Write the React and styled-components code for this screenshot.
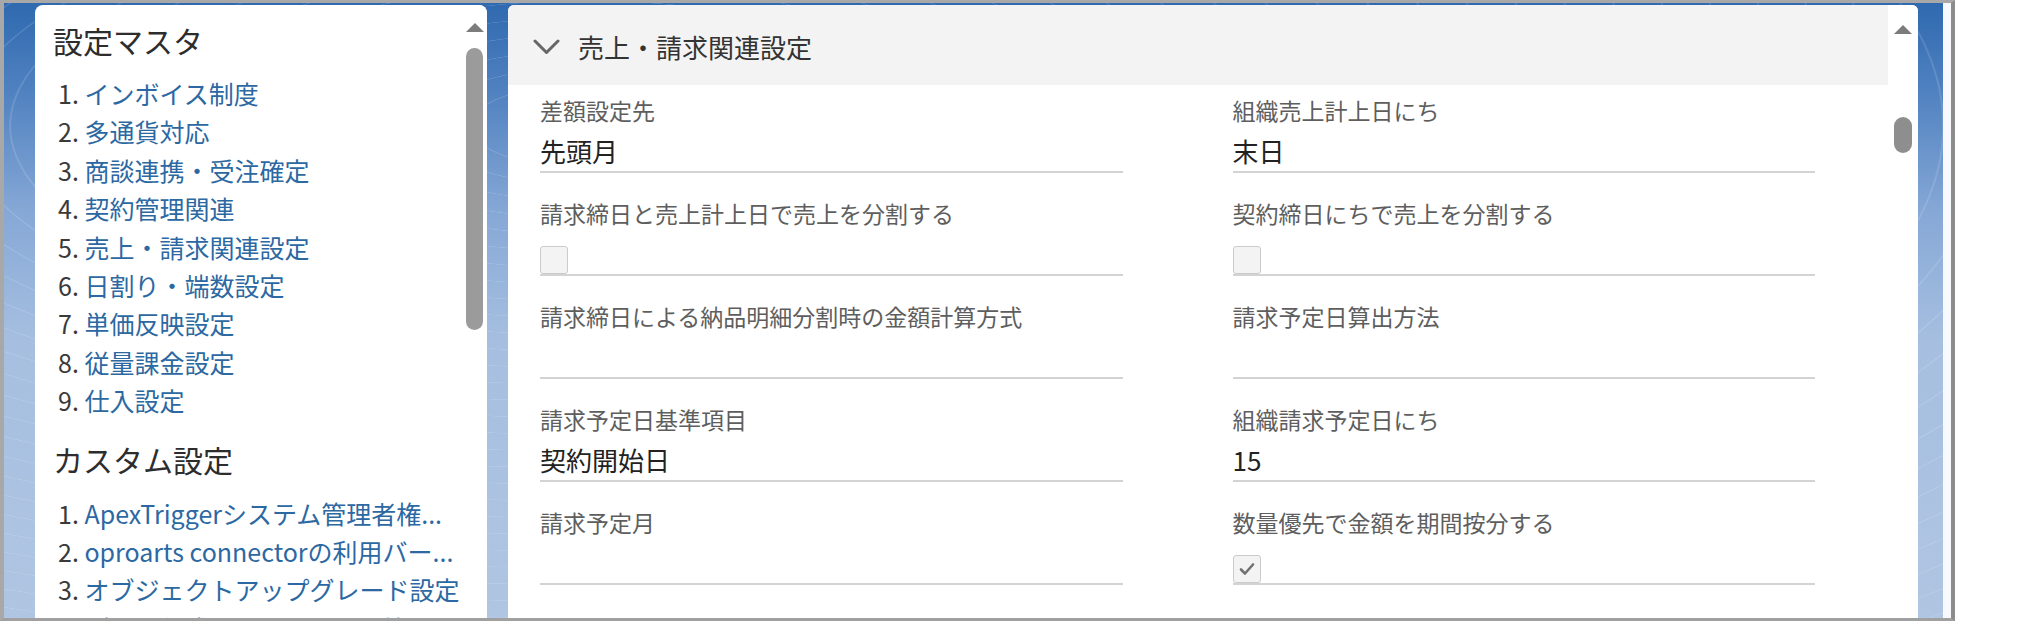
import React from "react";
import styled, { createGlobalStyle } from "styled-components";

const GlobalStyle = createGlobalStyle`
  html, body { margin: 0; padding: 0; background: #ffffff; }
  body { font-family: "Noto Sans CJK JP", "Noto Sans", sans-serif; }
  * { box-sizing: border-box; }
`;

const Frame = styled.div`
  width: 1955px;
  height: 621px;
  display: flex;
  border-top: 3px solid #a8a8a8;
  border-left: 4px solid #a8a8a8;
  border-bottom: 3px solid #a0a0a0;
  border-right: 4px solid #8c8c8c;
  background: #f7f9fc;
  padding-right: 8px;
`;

const Desktop = styled.div`
  flex: 1;
  display: flex;
  gap: 21px;
  padding: 2px 25px 0 31px;
  overflow: hidden;
  background:
    repeating-radial-gradient(ellipse at 30% 20%, rgba(255,255,255,0) 0 22px, rgba(255,255,255,0.13) 23px 24px, rgba(255,255,255,0) 25px 46px),
    linear-gradient(180deg, #2f69af 0%, #4f81c0 14%, #86a8d6 34%, #a6bfe0 55%, #afc5e2 100%);
`;

const LeftPanel = styled.div`
  width: 452px;
  flex: none;
  background: #ffffff;
  border-radius: 8px 8px 0 0;
  display: flex;
  overflow: hidden;
`;

const LeftContent = styled.div`
  flex: 1;
  min-width: 0;
  padding: 15px 0 0 18px;
  overflow: hidden;
`;

const SectionTitle = styled.h2`
  margin: ${(p) => (p.$first ? "0" : "19px 0 0")};
  font-size: 30px;
  line-height: 40px;
  font-weight: 400;
  color: #2d2d2d;
  white-space: nowrap;
`;

const MenuList = styled.ul`
  list-style: none;
  margin: ${(p) => (p.$first ? "14px" : "15px")} 0 0;
  padding: 0 0 0 5px;
`;

const MenuItem = styled.li`
  font-size: 25px;
  line-height: 38.4px;
  white-space: nowrap;
  overflow: hidden;
`;

const Num = styled.span`
  color: #3a3a3a;
`;

const MenuLink = styled.span`
  color: #2c68a2;
`;

const ScrollTrack = styled.div`
  width: ${(p) => p.$w}px;
  flex: none;
  display: flex;
  flex-direction: column;
  align-items: center;
  padding-top: ${(p) => p.$top}px;
  background: #ffffff;
`;

const ScrollArrow = styled.div`
  width: 0;
  height: 0;
  border-left: ${(p) => p.$half}px solid transparent;
  border-right: ${(p) => p.$half}px solid transparent;
  border-bottom: 9px solid #7c7c7c;
`;

const ScrollThumb = styled.div`
  margin-top: ${(p) => p.$gap}px;
  width: ${(p) => p.$w}px;
  height: ${(p) => p.$h}px;
  border-radius: 9px;
  background: ${(p) => p.$color};
`;

const RightPanel = styled.div`
  flex: 1;
  min-width: 0;
  background: #ffffff;
  border-radius: 6px 6px 0 0;
  display: flex;
  overflow: hidden;
`;

const Main = styled.div`
  flex: 1;
  min-width: 0;
  display: flex;
  flex-direction: column;
`;

const SectionHeader = styled.div`
  height: 80px;
  flex: none;
  background: #f3f3f3;
  display: flex;
  align-items: center;
  gap: 18px;
  padding: 3px 0 0 25px;
`;

const HeaderTitle = styled.span`
  font-size: 26px;
  color: #333333;
  line-height: 36px;
`;

const FormGrid = styled.div`
  display: grid;
  grid-template-columns: 1fr 1fr;
  column-gap: 110px;
  row-gap: 25px;
  padding: 10px 73px 0 32px;
`;

const Field = styled.div`
  border-bottom: 2px solid #d3d3d3;
  min-width: 0;
`;

const FieldLabel = styled.div`
  font-size: 23px;
  line-height: 30px;
  color: #5e5e5e;
  white-space: nowrap;
`;

const FieldValue = styled.div`
  height: 46px;
  padding-top: 8px;
  font-size: 26px;
  line-height: 36px;
  color: #222222;
  white-space: nowrap;
`;

const CheckArea = styled.div`
  height: 46px;
  display: flex;
  align-items: flex-end;
`;

const CheckBox = styled.div`
  width: 28px;
  height: 28px;
  border: 1px solid #cbcbcb;
  border-radius: 3px;
  background: #f3f3f3;
  display: flex;
  align-items: center;
  justify-content: center;
`;

const Chevron = () => (
  <svg width="27" height="16" viewBox="0 0 27 16">
    <polyline points="2,2 13.5,13.5 25,2" fill="none" stroke="#666666" strokeWidth="3" strokeLinecap="round" strokeLinejoin="round" />
  </svg>
);

const CheckMark = () => (
  <svg width="22" height="22" viewBox="0 0 22 22">
    <polyline points="5,11.5 9,15.5 17,6.5" fill="none" stroke="#727272" strokeWidth="2.6" strokeLinecap="round" strokeLinejoin="round" />
  </svg>
);

const masterItems = [
  "インボイス制度",
  "多通貨対応",
  "商談連携・受注確定",
  "契約管理関連",
  "売上・請求関連設定",
  "日割り・端数設定",
  "単価反映設定",
  "従量課金設定",
  "仕入設定",
];

const customItems = [
  "ApexTriggerシステム管理者権...",
  "oproarts connectorの利用バー...",
  "オブジェクトアップグレード設定",
  "データ作成によるシステム管理...",
];

const fields = [
  { label: "差額設定先", value: "先頭月" },
  { label: "組織売上計上日にち", value: "末日" },
  { label: "請求締日と売上計上日で売上を分割する", check: false },
  { label: "契約締日にちで売上を分割する", check: false },
  { label: "請求締日による納品明細分割時の金額計算方式", value: "" },
  { label: "請求予定日算出方法", value: "" },
  { label: "請求予定日基準項目", value: "契約開始日" },
  { label: "組織請求予定日にち", value: "15" },
  { label: "請求予定月", value: "" },
  { label: "数量優先で金額を期間按分する", check: true },
];

const Menu = ({ items, first }) => (
  <MenuList $first={first}>
    {items.map((t, i) => (
      <MenuItem key={t}>
        <Num>{i + 1}. </Num>
        <MenuLink>{t}</MenuLink>
      </MenuItem>
    ))}
  </MenuList>
);

export default function App() {
  return (
    <>
      <GlobalStyle />
      <Frame>
        <Desktop>
          <LeftPanel>
            <LeftContent>
              <SectionTitle $first>設定マスタ</SectionTitle>
              <Menu items={masterItems} first />
              <SectionTitle>カスタム設定</SectionTitle>
              <Menu items={customItems} />
            </LeftContent>
            <ScrollTrack $w={25} $top={18}>
              <ScrollArrow $half={9} />
              <ScrollThumb $gap={16} $w={17} $h={282} $color="#9b9b9b" />
            </ScrollTrack>
          </LeftPanel>
          <RightPanel>
            <Main>
              <SectionHeader>
                <Chevron />
                <HeaderTitle>売上・請求関連設定</HeaderTitle>
              </SectionHeader>
              <FormGrid>
                {fields.map((f) => (
                  <Field key={f.label}>
                    <FieldLabel>{f.label}</FieldLabel>
                    {"check" in f ? (
                      <CheckArea>
                        <CheckBox>{f.check && <CheckMark />}</CheckBox>
                      </CheckArea>
                    ) : (
                      <FieldValue>{f.value}</FieldValue>
                    )}
                  </Field>
                ))}
              </FormGrid>
            </Main>
            <ScrollTrack $w={30} $top={20}>
              <ScrollArrow $half={9.5} />
              <ScrollThumb $gap={83} $w={18} $h={36} $color="#8e8e8e" />
            </ScrollTrack>
          </RightPanel>
        </Desktop>
      </Frame>
    </>
  );
}
